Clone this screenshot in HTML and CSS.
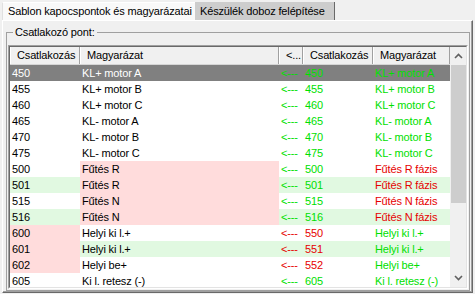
FILE: index.html
```html
<!DOCTYPE html>
<html lang="hu">
<head>
    <meta charset="UTF-8">
    <meta name="viewport" content="width=device-width, initial-scale=1.0">
    <title>Sablon kapocspontok</title>
    <link rel="stylesheet" href="styles.css">
</head>
<body>
    <div class="tabs">
        <div class="tab active">Sablon kapocspontok és magyarázatai</div>
        <div class="tab other">Készülék doboz felépítése</div>
    </div>
    <div class="panel">
        <fieldset class="group">
            <legend>Csatlakozó pont:</legend>
            <div class="grid">
                <div class="grid-in">
                    <div class="list">
                        <div class="head">
                            <div>Csatlakozás</div>
                            <div>Magyarázat</div>
                            <div>&lt;...</div>
                            <div>Csatlakozás</div>
                            <div>Magyarázat</div>
                        </div>
                        <div class="row selected">
                            <div>450</div><div>KL+ motor A</div>
                            <div class="g">&lt;---</div><div class="g">450</div><div class="g">KL+ motor A</div>
                        </div>
                        <div class="row">
                            <div>455</div><div>KL+ motor B</div>
                            <div class="g">&lt;---</div><div class="g">455</div><div class="g">KL+ motor B</div>
                        </div>
                        <div class="row">
                            <div>460</div><div>KL+ motor C</div>
                            <div class="g">&lt;---</div><div class="g">460</div><div class="g">KL+ motor C</div>
                        </div>
                        <div class="row">
                            <div>465</div><div>KL- motor A</div>
                            <div class="g">&lt;---</div><div class="g">465</div><div class="g">KL- motor A</div>
                        </div>
                        <div class="row">
                            <div>470</div><div>KL- motor B</div>
                            <div class="g">&lt;---</div><div class="g">470</div><div class="g">KL- motor B</div>
                        </div>
                        <div class="row">
                            <div>475</div><div>KL- motor C</div>
                            <div class="g">&lt;---</div><div class="g">475</div><div class="g">KL- motor C</div>
                        </div>
                        <div class="row">
                            <div>500</div><div class="pk">Fűtés R</div>
                            <div class="g">&lt;---</div><div class="g">500</div><div class="r">Fűtés R fázis</div>
                        </div>
                        <div class="row gn">
                            <div>501</div><div class="pk">Fűtés R</div>
                            <div class="g">&lt;---</div><div class="g">501</div><div class="r">Fűtés R fázis</div>
                        </div>
                        <div class="row">
                            <div>515</div><div class="pk">Fűtés N</div>
                            <div class="g">&lt;---</div><div class="g">515</div><div class="r">Fűtés N fázis</div>
                        </div>
                        <div class="row gn">
                            <div>516</div><div class="pk">Fűtés N</div>
                            <div class="g">&lt;---</div><div class="g">516</div><div class="r">Fűtés N fázis</div>
                        </div>
                        <div class="row">
                            <div class="pk">600</div><div>Helyi ki l.+</div>
                            <div class="r">&lt;---</div><div class="r">550</div><div class="g">Helyi ki l.+</div>
                        </div>
                        <div class="row gn">
                            <div class="pk">601</div><div>Helyi ki l.+</div>
                            <div class="r">&lt;---</div><div class="r">551</div><div class="g">Helyi ki l.+</div>
                        </div>
                        <div class="row">
                            <div class="pk">602</div><div>Helyi be+</div>
                            <div class="r">&lt;---</div><div class="r">552</div><div class="g">Helyi be+</div>
                        </div>
                        <div class="row">
                            <div>605</div><div>Ki l. retesz (-)</div>
                            <div class="g">&lt;---</div><div class="g">605</div><div class="g">Ki l. retesz (-)</div>
                        </div>
                    </div>
                    <div class="scroll">
                        <div class="sb-btn">
                            <svg width="9" height="6" viewBox="0 0 9 6"><polyline points="1,5 4.5,1.5 8,5" fill="none" stroke="#606060" stroke-width="1.6"/></svg>
                        </div>
                        <div class="thumb"></div>
                        <div class="track"></div>
                        <div class="sb-btn">
                            <svg width="9" height="6" viewBox="0 0 9 6"><polyline points="1,1 4.5,4.5 8,1" fill="none" stroke="#606060" stroke-width="1.6"/></svg>
                        </div>
                    </div>
                </div>
            </div>
        </fieldset>
    </div>
</body>
</html>
```

FILE: styles.css
```css
body {
    margin: 0;
    background-color: #f0f0f0;
    font-family: "Liberation Sans", Arial, sans-serif;
    font-size: 11px;
    letter-spacing: -0.15px;
    color: #000;
}

.tabs {
    display: flex;
    height: 18px;
    padding: 2px 0 0 2px;
}

.tab {
    box-sizing: border-box;
    height: 18px;
    line-height: 18px;
    padding-left: 5px;
    white-space: nowrap;
}

.tab.active {
    width: 193px;
    background-color: #f9f9f9;
    border-top: 1px solid #fff;
    border-left: 1px solid #e0e0e0;
    padding-left: 5px;
    line-height: 17px;
}

.tab.other {
    width: 140px;
    background-color: #cdcdcd;
    border-right: 1px solid #696969;
}

.panel {
    box-sizing: border-box;
    width: 471px;
    height: 273px;
    margin-left: 2px;
    border-top: 1px solid #fff;
    border-left: 1px solid #fff;
    border-right: 1px solid #696969;
    border-bottom: 1px solid #696969;
    box-shadow: inset -1px -1px #a0a0a0;
}

.group {
    box-sizing: border-box;
    width: 464px;
    margin: 5px 0 0 3px;
    padding: 0 1px 1px 1px;
    border: 1px solid #a0a0a0;
    min-inline-size: 0;
}

.group legend {
    margin-left: 5px;
    padding: 0 2px;
    line-height: 13px;
}

.grid {
    box-sizing: border-box;
    width: 460px;
    height: 244px;
    margin-top: 6px;
    display: flex;
    border: 1px solid;
    border-color: #a0a0a0 #fff #fff #a0a0a0;
}

.grid-in {
    flex: 1;
    display: flex;
    border: 1px solid;
    border-color: #696969 #e3e3e3 #e3e3e3 #696969;
    background-color: #fff;
    overflow: hidden;
}

.list {
    width: 440px;
    flex: none;
}

.head,
.row {
    display: grid;
    grid-template-columns: 70px 199px 24px 70px 77px;
}

.head {
    box-sizing: border-box;
    height: 18px;
    background-color: #f0f0f0;
    border-bottom: 1px solid #d5d5d5;
}

.head div {
    padding-left: 6px;
    line-height: 17px;
    border-left: 1px solid #fff;
    border-right: 1px solid #a0a0a0;
    white-space: nowrap;
    overflow: hidden;
}

.row {
    height: 16px;
    line-height: 16px;
}

.row div {
    padding-left: 2px;
    white-space: nowrap;
    overflow: hidden;
}

.row.selected {
    background-color: #808080;
    color: #fff;
}

.row.gn {
    background-color: #e1f9e1;
}

.row div.pk {
    background-color: #ffdcdc;
}

.g {
    color: #00e000;
}

.r {
    color: #e60000;
}

.scroll {
    width: 16px;
    display: flex;
    flex-direction: column;
    background-color: #f0f0f0;
}

.sb-btn {
    height: 18px;
    display: flex;
    align-items: center;
    justify-content: center;
    flex: none;
}

.thumb {
    height: 138px;
    margin-left: 1px;
    background-color: #cdcdcd;
    flex: none;
}

.track {
    flex: 1;
}
```
